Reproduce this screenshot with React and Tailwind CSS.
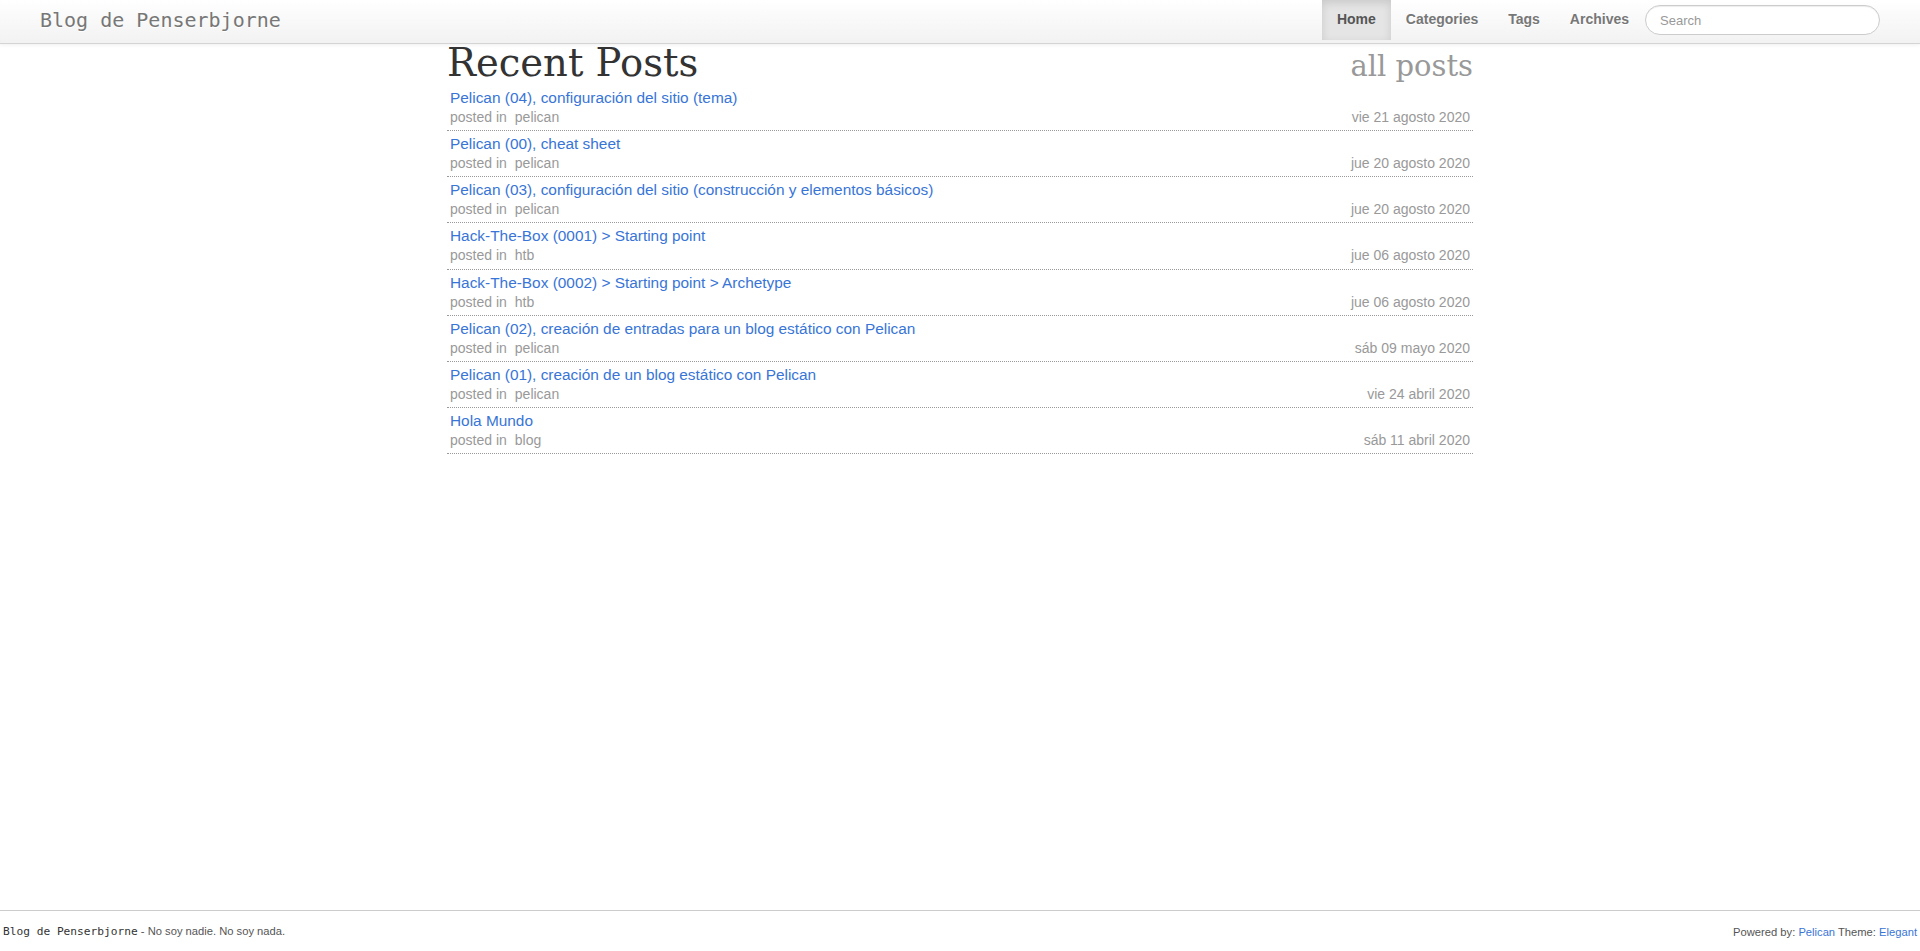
import React from "react";

const posts = [
  { title: "Pelican (04), configuración del sitio (tema)", cat: "pelican", date: "vie 21 agosto 2020" },
  { title: "Pelican (00), cheat sheet", cat: "pelican", date: "jue 20 agosto 2020" },
  { title: "Pelican (03), configuración del sitio (construcción y elementos básicos)", cat: "pelican", date: "jue 20 agosto 2020" },
  { title: "Hack-The-Box (0001) > Starting point", cat: "htb", date: "jue 06 agosto 2020" },
  { title: "Hack-The-Box (0002) > Starting point > Archetype", cat: "htb", date: "jue 06 agosto 2020" },
  { title: "Pelican (02), creación de entradas para un blog estático con Pelican", cat: "pelican", date: "sáb 09 mayo 2020" },
  { title: "Pelican (01), creación de un blog estático con Pelican", cat: "pelican", date: "vie 24 abril 2020" },
  { title: "Hola Mundo", cat: "blog", date: "sáb 11 abril 2020" },
];

export default function App() {
  return (
    <div className="min-h-screen flex flex-col bg-white font-['Liberation_Sans',Arial,sans-serif] text-[14px] text-[#333]">
      <header className="h-[44px] shrink-0 flex items-start justify-between border-b border-[#d4d4d4] bg-gradient-to-b from-white to-[#f2f2f2] shadow-[0_1px_4px_rgba(0,0,0,0.065)] pl-[40px] pr-[40px]">
        <a className="pt-[10px] pb-[10px] text-[20px] leading-[20px] text-[#777] font-['DejaVu_Sans_Mono',monospace] [text-shadow:0_1px_0_#fff]">
          Blog de Penserbjorne
        </a>
        <div className="flex items-start">
          <nav className="flex">
            <a className="h-[40px] px-[15px] pt-[9px] pb-[11px] leading-[20px] font-bold text-[14px] text-[#555] bg-[#e5e5e5] shadow-[inset_0_3px_8px_rgba(0,0,0,0.125)]">Home</a>
            <a className="h-[40px] px-[15px] pt-[9px] pb-[11px] leading-[20px] font-bold text-[14px] text-[#777] [text-shadow:0_1px_0_#fff]">Categories</a>
            <a className="h-[40px] px-[15px] pt-[9px] pb-[11px] leading-[20px] font-bold text-[14px] text-[#777] [text-shadow:0_1px_0_#fff]">Tags</a>
            <a className="h-[40px] px-[15px] pt-[9px] pb-[11px] leading-[20px] font-bold text-[14px] text-[#777] [text-shadow:0_1px_0_#fff]">Archives</a>
          </nav>
          <input
            placeholder="Search"
            className="mt-[5px] ml-px w-[235px] h-[30px] rounded-[15px] border border-[#ccc] bg-white px-[14px] text-[13px] text-[#555] placeholder:text-[#999] shadow-[inset_0_1px_1px_rgba(0,0,0,0.075)] outline-none"
          />
        </div>
      </header>

      <main className="w-[1026px] mx-auto">
        <div className="flex items-baseline justify-between font-['DejaVu_Serif',serif] leading-[38px]">
          <h1 className="text-[38.5px] text-[#333] font-normal">Recent Posts</h1>
          <a className="text-[29px] text-[#999]">all posts</a>
        </div>
        <ul>
          {posts.map((p, i) => (
            <li key={i} className="px-[3px] pt-[4px] pb-[3.15px] border-b border-dotted border-[#999]">
              <a className="block text-[15.4px] leading-[18px] text-[#3875d7]">{p.title}</a>
              <div className="flex justify-between text-[14px] leading-[20px] text-[#999]">
                <span>
                  posted in<span className="ml-[8px]">{p.cat}</span>
                </span>
                <span>{p.date}</span>
              </div>
            </li>
          ))}
        </ul>
      </main>

      <footer className="mt-auto h-[41px] shrink-0 border-t border-[#ccc] flex items-center justify-between px-[3px] pt-[2px] text-[11.2px] text-[#555]">
        <div>
          <span className="font-['DejaVu_Sans_Mono',monospace] text-[#333]">Blog de Penserbjorne</span>
          <span> - No soy nadie. No soy nada.</span>
        </div>
        <div>
          Powered by: <a className="text-[#3875d7]">Pelican</a> Theme: <a className="text-[#3875d7]">Elegant</a>
        </div>
      </footer>
    </div>
  );
}
